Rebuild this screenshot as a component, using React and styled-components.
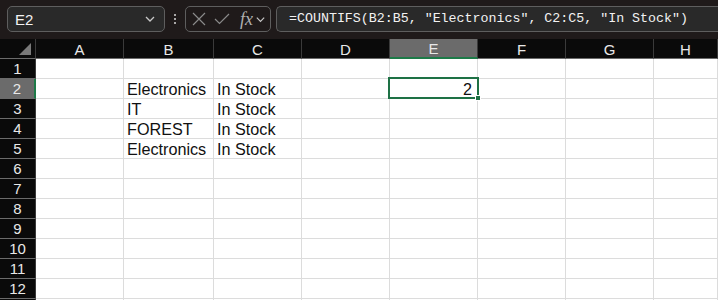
import React from "react";
import styled, { createGlobalStyle } from "styled-components";

const GlobalStyle = createGlobalStyle`
  html, body {
    margin: 0;
    padding: 0;
    background: #ffffff;
    overflow: hidden;
  }
  * {
    box-sizing: border-box;
  }
`;

const columns = ["A", "B", "C", "D", "E", "F", "G", "H"];
const rows = [1, 2, 3, 4, 5, 6, 7, 8, 9, 10, 11, 12, 13];

const data = {
  B2: "Electronics",
  C2: "In Stock",
  B3: "IT",
  C3: "In Stock",
  B4: "FOREST",
  C4: "In Stock",
  B5: "Electronics",
  C5: "In Stock",
  E2: 2,
};

const App = () => {
  return (
    <Page>
      <GlobalStyle />
      <FormulaBar>
        <NameBox>
          <NameText>E2</NameText>
          <Chevron size={12} />
        </NameBox>
        <Dots>
          <span />
          <span />
          <span />
        </Dots>
        <ActionBox>
          <svg width="14" height="14" viewBox="0 0 14 14">
            <path d="M1 1 L13 13 M13 1 L1 13" stroke="#8a8a8a" strokeWidth="1.2" fill="none" />
          </svg>
          <svg width="16" height="12" viewBox="0 0 16 12">
            <path d="M1 6 L5.5 10.5 L15 1" stroke="#8a8a8a" strokeWidth="1.2" fill="none" />
          </svg>
          <Fx>fx</Fx>
          <Chevron size={11} />
        </ActionBox>
        <FormulaBox>=COUNTIFS(B2:B5, "Electronics", C2:C5, "In Stock")</FormulaBox>
      </FormulaBar>

      <Sheet>
        <Corner>
          <CornerTriangle />
        </Corner>
        {columns.map((c) => (
          <ColHeader key={c} $active={c === "E"}>
            {c}
          </ColHeader>
        ))}
        {rows.map((r) => (
          <React.Fragment key={r}>
            {/* last row is only one pixel tall on screen, its number stays hidden */}
            <RowHeader $active={r === 2}>{r < 13 ? r : ""}</RowHeader>
            {columns.map((c) => {
              const ref = c + r;
              const value = data[ref];
              const isNumber = typeof value === "number";
              return (
                <Cell key={ref} $number={isNumber} $selected={ref === "E2"}>
                  {value}
                  {ref === "E2" && (
                    <Selection>
                      <FillHandle />
                    </Selection>
                  )}
                </Cell>
              );
            })}
          </React.Fragment>
        ))}
      </Sheet>
    </Page>
  );
};

const Chevron = ({ size }) => (
  <svg width={size} height={size} viewBox="0 0 12 12">
    <path d="M2 4 L6 8 L10 4" stroke="#c8c8c8" strokeWidth="1.3" fill="none" />
  </svg>
);

const Page = styled.div`
  width: 718px;
  height: 300px;
  overflow: hidden;
  font-family: "Liberation Sans", Arial, sans-serif;
`;

const FormulaBar = styled.div`
  height: 39px;
  background: #1f1a1a;
  display: flex;
  align-items: flex-start;
  padding: 6px 0 0 7px;
`;

const NameBox = styled.div`
  width: 158px;
  height: 26px;
  background: #292929;
  border: 1px solid #5e5e5e;
  border-radius: 5px;
  display: flex;
  align-items: center;
  justify-content: space-between;
  padding: 0 8px 0 7px;
`;

const NameText = styled.span`
  color: #f2f2f2;
  font-size: 15px;
`;

const Dots = styled.div`
  width: 20px;
  height: 26px;
  display: flex;
  flex-direction: column;
  align-items: center;
  justify-content: center;
  gap: 2px;

  span {
    width: 2px;
    height: 2px;
    background: #d8d8d8;
    border-radius: 1px;
  }
`;

const ActionBox = styled.div`
  width: 86px;
  height: 26px;
  border: 1px solid #5e5e5e;
  border-radius: 5px;
  display: flex;
  align-items: center;
  gap: 8px;
  padding: 0 2px 0 6px;
`;

const Fx = styled.span`
  font-family: "Liberation Serif", "Times New Roman", serif;
  font-style: italic;
  font-size: 18px;
  color: #b0b0b0;
  margin-left: 2px;
  margin-right: -6px;
`;

const FormulaBox = styled.div`
  flex: 1;
  height: 26px;
  margin-left: 5px;
  background: #292929;
  border: 1px solid #5e5e5e;
  border-right: none;
  border-radius: 5px 0 0 5px;
  color: #f2f2f2;
  font-family: "Liberation Mono", "Courier New", monospace;
  font-size: 13.3px;
  line-height: 24px;
  padding-left: 12px;
  white-space: nowrap;
`;

const Sheet = styled.div`
  display: grid;
  grid-template-columns: 36px 88px 90px 88px 88px 88px 88px 88px 1fr;
  grid-auto-rows: 20px;
`;

const Corner = styled.div`
  position: relative;
  background: #0a0a0a;
  border-right: 1px solid #3a3a3a;
  border-bottom: 1px solid #6b6b6b;
`;

const CornerTriangle = styled.div`
  position: absolute;
  right: 4px;
  bottom: 3px;
  width: 0;
  height: 0;
  border-left: 12px solid transparent;
  border-bottom: 12px solid #7a7a7a;
`;

const ColHeader = styled.div`
  background: ${(p) => (p.$active ? "#6b6b6b" : "#0a0a0a")};
  color: #e8e8e8;
  font-size: 15px;
  display: flex;
  align-items: center;
  justify-content: center;
  padding-top: 1px;
  border-right: 1px solid #3a3a3a;
  border-bottom: ${(p) => (p.$active ? "2px solid #1d7a48" : "1px solid #6b6b6b")};
`;

const RowHeader = styled.div`
  background: ${(p) => (p.$active ? "#6b6b6b" : "#0a0a0a")};
  color: #e8e8e8;
  font-size: 15px;
  display: flex;
  align-items: center;
  justify-content: center;
  border-bottom: 1px solid #6b6b6b;
  border-right: ${(p) => (p.$active ? "2px solid #1d7a48" : "1px solid #3a3a3a")};
`;

const Cell = styled.div`
  position: relative;
  z-index: ${(p) => (p.$selected ? 2 : "auto")};
  background: #ffffff;
  color: #111111;
  font-size: 16.2px;
  line-height: 20px;
  padding: 0 5px 0 3px;
  white-space: nowrap;
  text-align: ${(p) => (p.$number ? "right" : "left")};
  border-right: 1px solid #dcdcdc;
  border-bottom: 1px solid #dcdcdc;
`;

const Selection = styled.div`
  position: absolute;
  top: -2px;
  left: -2px;
  right: -2px;
  bottom: -1px;
  border: 2px solid #1e7145;
  pointer-events: none;
`;

const FillHandle = styled.div`
  position: absolute;
  right: -4px;
  bottom: -4px;
  width: 6px;
  height: 6px;
  background: #1e7145;
  border: 1px solid #ffffff;
`;

export default App;
